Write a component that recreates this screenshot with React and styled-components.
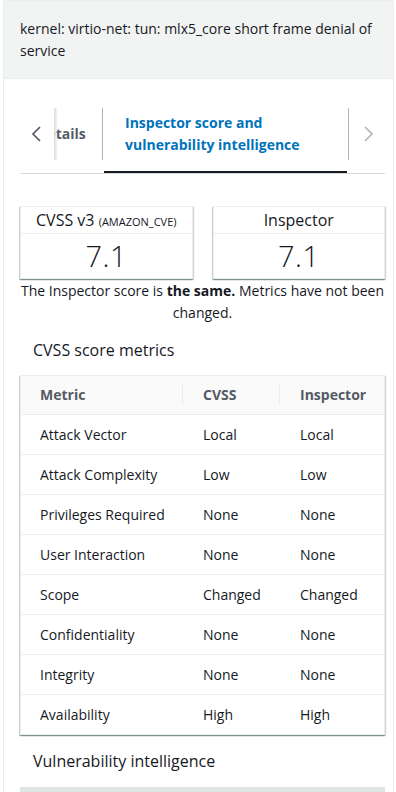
import React from 'react';
import styled, { createGlobalStyle } from 'styled-components';

const GlobalStyle = createGlobalStyle`
    html, body {
        margin: 0;
        padding: 0;
        background: #ffffff;
    }
    body {
        font-family: "Open Sans", "Noto Sans", sans-serif;
        color: #16191f;
        -webkit-font-smoothing: antialiased;
    }
    * {
        box-sizing: border-box;
    }
`;

const Panel = styled.div`
    width: 391px;
    min-height: 792px;
    margin-left: 3px;
    border-left: 1px solid #eaeded;
    border-right: 1px solid #eaeded;
    border-top: 1px solid #eaeded;
    background: #ffffff;
`;

const Header = styled.div`
    background: #f2f3f3;
    border-bottom: 1px solid #eaeded;
    padding: 17px 16px 16px;
    font-size: 14px;
    line-height: 22px;
`;

const Body = styled.div`
    padding: 0 8px 0 16px;
`;

const TabBar = styled.div`
    margin-top: 20px;
    display: flex;
    align-items: stretch;
    height: 75px;
    border-bottom: 1px solid #d5dbdb;
`;

const ArrowButton = styled.button`
    flex: 0 0 34px;
    display: flex;
    align-items: center;
    justify-content: center;
    padding: 0 0 4px;
    border: none;
    background: transparent;
    color: ${(props) => (props.disabled ? '#aab7b8' : '#545b64')};
    cursor: pointer;
`;

const TabViewport = styled.div`
    flex: 1;
    min-width: 0;
    overflow: hidden;
    position: relative;
    display: flex;

    &::before {
        content: '';
        position: absolute;
        left: 0;
        top: 9px;
        bottom: 13px;
        width: 4px;
        background: linear-gradient(to right, #d5dbdb, rgba(255, 255, 255, 0));
        z-index: 1;
    }
`;

const TabTrack = styled.div`
    display: flex;
    flex: 0 0 auto;
    margin-left: ${(props) => props.$offset}px;
`;

const Tab = styled.div`
    position: relative;
    flex: 0 0 auto;
    width: ${(props) => (props.$width ? `${props.$width}px` : 'auto')};
    display: flex;
    align-items: center;
    padding: 0 20px 4px ${(props) => (props.$active ? 22 : 20)}px;
    font-size: 14px;
    line-height: 22px;
    font-weight: 700;
    color: ${(props) => (props.$active ? '#0073bb' : '#545b64')};
    white-space: ${(props) => (props.$active ? 'normal' : 'nowrap')};

    &::before {
        content: '';
        position: absolute;
        right: 0;
        top: 9px;
        bottom: 13px;
        width: 1px;
        background: #aab7b8;
    }

    &::after {
        content: '';
        display: ${(props) => (props.$active ? 'block' : 'none')};
        position: absolute;
        left: 1px;
        right: 2px;
        bottom: -1px;
        height: 3px;
        background: #16191f;
    }
`;

const Chevron = ({ dir }) => (
    <svg width="16" height="16" viewBox="0 0 16 16" fill="none">
        <path
            d={dir === 'left' ? 'M11 1 L4 8 L11 15' : 'M5 1 L12 8 L5 15'}
            stroke="currentColor"
            strokeWidth="1.7"
            strokeLinejoin="miter"
        />
    </svg>
);

const Cards = styled.div`
    margin-top: 32px;
    display: grid;
    grid-template-columns: 1fr 1fr;
    gap: 20px;
`;

const ScoreCard = styled.div`
    background: #ffffff;
    border: 1px solid #eaeded;
    box-shadow: 0 1px 1px 0 rgba(0, 28, 36, 0.3), 1px 1px 1px 0 rgba(0, 28, 36, 0.15),
        -1px 1px 1px 0 rgba(0, 28, 36, 0.15);
    text-align: center;
`;

const CardTitle = styled.div`
    height: 27px;
    line-height: 26px;
    font-size: 16px;
    border-bottom: 1px solid #eaeded;

    small {
        font-size: 11px;
        text-transform: uppercase;
    }
`;

const CardValue = styled.div`
    height: 44px;
    line-height: 44px;
    font-size: 29px;
    font-weight: 300;
    letter-spacing: 0.5px;
`;

const Note = styled.p`
    margin: 1px 0 0;
    font-size: 14px;
    line-height: 22px;
    text-align: center;
`;

const SectionTitle = styled.h3`
    margin: ${(props) => props.$top}px 0 0;
    padding-left: 13px;
    font-size: 16px;
    line-height: 22px;
    font-weight: 400;
`;

const Table = styled.div`
    margin-top: 14px;
    background: #ffffff;
    border: 1px solid #eaeded;
    box-shadow: 0 1px 1px 0 rgba(0, 28, 36, 0.3), 1px 1px 1px 0 rgba(0, 28, 36, 0.15),
        -1px 1px 1px 0 rgba(0, 28, 36, 0.15);
`;

const Row = styled.div`
    display: grid;
    grid-template-columns: 162px 97px 1fr;
    height: ${(props) => (props.$head ? 38 : 40)}px;
    align-items: center;
    background: ${(props) => (props.$head ? '#fafafa' : '#ffffff')};
    border-top: ${(props) => (props.$head ? 'none' : '1px solid #eaeded')};
    font-size: 14px;
    font-weight: ${(props) => (props.$head ? 700 : 400)};
    color: ${(props) => (props.$head ? '#545b64' : '#16191f')};
`;

const Cell = styled.div`
    padding-left: ${(props) => (props.$first ? 19 : 20)}px;
    height: 20px;
    line-height: 20px;
    border-left: ${(props) => (props.$divider ? '1px solid #eaeded' : 'none')};
    margin-left: ${(props) => (props.$divider ? -1 : 0)}px;
`;

const IntelBar = styled.div`
    margin-top: 15px;
    height: 20px;
    background: #dfe4e4;
`;

const metrics = [
    ['Attack Vector', 'Local', 'Local'],
    ['Attack Complexity', 'Low', 'Low'],
    ['Privileges Required', 'None', 'None'],
    ['User Interaction', 'None', 'None'],
    ['Scope', 'Changed', 'Changed'],
    ['Confidentiality', 'None', 'None'],
    ['Integrity', 'None', 'None'],
    ['Availability', 'High', 'High'],
];

const App = () => {
    return (
        <>
            <GlobalStyle />
            <Panel>
                <Header>kernel: virtio-net: tun: mlx5_core short frame denial of service</Header>
                <Body>
                    <TabBar>
                        <ArrowButton aria-label="Previous tab">
                            <Chevron dir="left" />
                        </ArrowButton>
                        <TabViewport>
                            {/* tab list is scrolled so that "Details" is partly hidden */}
                            <TabTrack $offset={-37}>
                                <Tab $width={86}>Details</Tab>
                                <Tab $active $width={246}>
                                    Inspector score and vulnerability intelligence
                                </Tab>
                            </TabTrack>
                        </TabViewport>
                        <ArrowButton disabled aria-label="Next tab">
                            <Chevron dir="right" />
                        </ArrowButton>
                    </TabBar>

                    <Cards>
                        <ScoreCard>
                            <CardTitle>
                                CVSS v3 <small>(amazon_cve)</small>
                            </CardTitle>
                            <CardValue>7.1</CardValue>
                        </ScoreCard>
                        <ScoreCard>
                            <CardTitle>Inspector</CardTitle>
                            <CardValue>7.1</CardValue>
                        </ScoreCard>
                    </Cards>
                    <Note>
                        The Inspector score is <b>the same.</b> Metrics have not been changed.
                    </Note>

                    <SectionTitle $top={15}>CVSS score metrics</SectionTitle>
                    <Table>
                        <Row $head>
                            <Cell $first>Metric</Cell>
                            <Cell $divider>CVSS</Cell>
                            <Cell $divider>Inspector</Cell>
                        </Row>
                        {metrics.map(([name, cvss, inspector]) => (
                            <Row key={name}>
                                <Cell $first>{name}</Cell>
                                <Cell>{cvss}</Cell>
                                <Cell>{inspector}</Cell>
                            </Row>
                        ))}
                    </Table>

                    <SectionTitle $top={15}>Vulnerability intelligence</SectionTitle>
                    <IntelBar />
                </Body>
            </Panel>
        </>
    );
};

export default App;
